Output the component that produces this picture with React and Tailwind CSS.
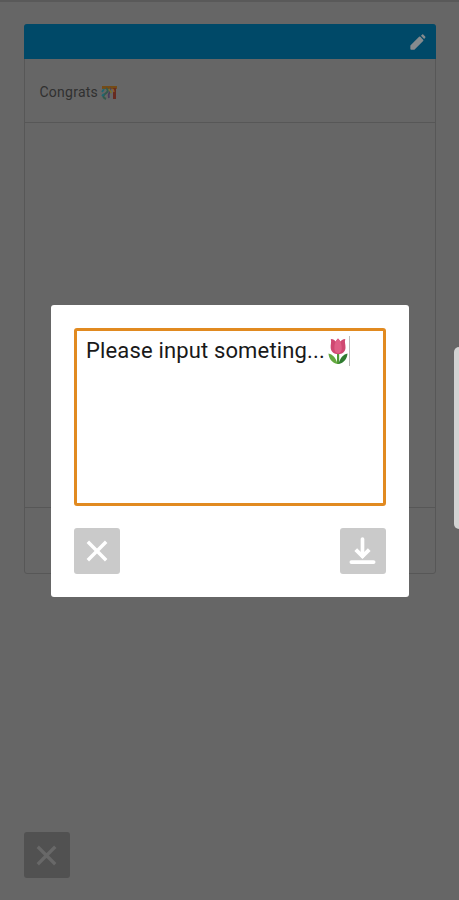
// src/App.jsx
const CloseIcon = ({ className = "" }) => (
  <svg viewBox="0 0 24 24" className={className} fill="none" aria-hidden="true">
    <path d="M2 2L22 22M22 2L2 22" stroke="currentColor" strokeWidth="3.8" />
  </svg>
);

const DownloadIcon = ({ className = "" }) => (
  <svg
    viewBox="0 0 28 30"
    className={className}
    fill="none"
    stroke="currentColor"
    aria-hidden="true"
  >
    <path d="M14 2V20" strokeWidth="3.8" strokeLinecap="round" />
    <path d="M7 13L14 20L21 13" strokeWidth="4" />
    <path d="M2.500 26H25.500" strokeWidth="4" strokeLinecap="round" />
  </svg>
);

const PencilIcon = ({ className = "" }) => (
  <svg
    viewBox="0 0 24 24"
    className={className}
    fill="currentColor"
    aria-hidden="true"
  >
    <path
      d="M3 17.3V21h3.7L18 9.7l-3.7-3.7L3 17.3z"
      stroke="currentColor"
      strokeWidth="2.4"
      strokeLinejoin="round"
    />
    <path d="M21.6 6.4c.5-.5.5-1.3 0-1.8L19.2 2.2c-.5-.5-1.3-.5-1.8 0l-1.5 1.5 4.3 4.3 1.4-1.6z" />
  </svg>
);

const TulipIcon = ({ className = "" }) => (
  <svg viewBox="0 0 20 26" className={className} aria-hidden="true">
    <path d="M9 14h2.200v12H9z" fill="#4f9a35" />
    <path d="M9.500 26C7.500 19 4.500 16.500.5 15.500c.2 5 3.500 9.500 9 10.500z" fill="#63a83f" />
    <path d="M10.500 26c2-7 5-9.500 9-10.500-.2 5-3.500 9.500-9 10.500z" fill="#2f7b30" />
    <path d="M2.800 1C6 1 7 2.500 7.500 3.500L10 .5l2.500 3C13 2.500 14.500 1 17.300 1c-1 3 .4 5.500.2 9-.2 3.700-3 6.200-7.300 6.200S3 13.700 2.700 10c-.3-3.500 1-6 .1-9z" fill="#cf4871" />
    <path d="M10 .5c3.500 3.500 4 8 3.600 11.500-.3 2-1.600 3.200-3.500 3.200S7 14 6.600 12C6 8.500 6.500 4 10 .5z" fill="#df5f86" />
  </svg>
);

const StreamersIcon = ({ className = "" }) => (
  <svg viewBox="0 0 17 15" className={className} fill="none" aria-hidden="true">
    <path d="M1 2.500H16" stroke="#744b16" strokeWidth="3" />
    <path d="M5 3C8 5 7 7 4 9S2.500 13 5 14" stroke="#33594d" strokeWidth="2" />
    <path d="M9 3C11 6 6 8 8 13" stroke="#493d5c" strokeWidth="1.800" />
    <path d="M3 4L1 7M3 9L1 11" stroke="#1d6772" strokeWidth="1.800" />
    <path d="M8 4L10.500 8" stroke="#777028" strokeWidth="1.500" />
    <path d="M13.500 3V14" stroke="#672b20" strokeWidth="3" />
    <path d="M12 4L13 7" stroke="#8b5d26" strokeWidth="1.500" />
  </svg>
);

const IconButton = ({ label, className = "", children }) => (
  <button
    type="button"
    aria-label={label}
    className={`flex h-[46px] w-[46px] items-center justify-center rounded-[3px] ${className}`}
  >
    {children}
  </button>
);

// Card that sits dimmed behind the dialog
const MessageCard = () => (
  <section className="flex h-[550px] flex-col rounded-[3px] border border-[#575757]">
    <header className="-mx-px -mt-px flex h-[35px] shrink-0 items-center justify-end rounded-t-[3px] bg-[#004968] pr-[9px]">
      <PencilIcon className="h-[18px] w-[18px] text-[#858b8e]" />
    </header>
    <div className="flex h-16 shrink-0 items-center gap-[3px] border-b border-[#575757] pl-[15px] pt-[3px] text-[14px] tracking-[0.25px] text-[#303030]">
      <span>Congrats</span>
      <StreamersIcon className="h-[15px] w-[17px]" />
    </div>
    <div className="flex-1" />
    <div className="h-[66px] border-t border-[#575757]" />
  </section>
);

const InputDialog = () => (
  <div
    role="dialog"
    className="absolute left-[51px] top-[303px] flex h-[292px] w-[357.5px] flex-col justify-between rounded-[3px] bg-white px-[23px] py-[23px]"
  >
    <div className="flex h-[178px] items-start rounded-[3px] border-[3px] border-[#e18a20] pl-[9px] pt-[5px]">
      <span className="text-[22px] leading-[30px] tracking-[0.15px] text-[#191919]">
        Please input someting...
      </span>
      <TulipIcon className="ml-[3px] mt-[2px] h-[26px] w-5" />
      <span className="ml-px h-[30px] w-px bg-[#bdbdbd]" />
    </div>
    <div className="flex justify-between">
      <IconButton label="Cancel" className="bg-[#cacaca] text-white">
        <CloseIcon className="h-[22px] w-[22px]" />
      </IconButton>
      <IconButton label="Save" className="bg-[#cacaca] text-white">
        <DownloadIcon className="h-[29px] w-[27px]" />
      </IconButton>
    </div>
  </div>
);

const App = () => (
  <main className="relative flex h-screen w-full flex-col justify-between overflow-hidden border-t-2 border-[#595959] bg-[#666666] px-[23.5px] pb-[22px] pt-[22px] font-['Roboto',sans-serif]">
    <MessageCard />
    <IconButton label="Close" className="bg-[#515151] text-[#686868]">
      <CloseIcon className="h-[21px] w-[21px]" />
    </IconButton>

    <InputDialog />

    {/* Edge panel handle */}
    <div className="absolute right-0 top-[345px] h-[182px] w-[5px] rounded-l-[5px] bg-[#d3d3d3]" />
  </main>
);

export default App;
